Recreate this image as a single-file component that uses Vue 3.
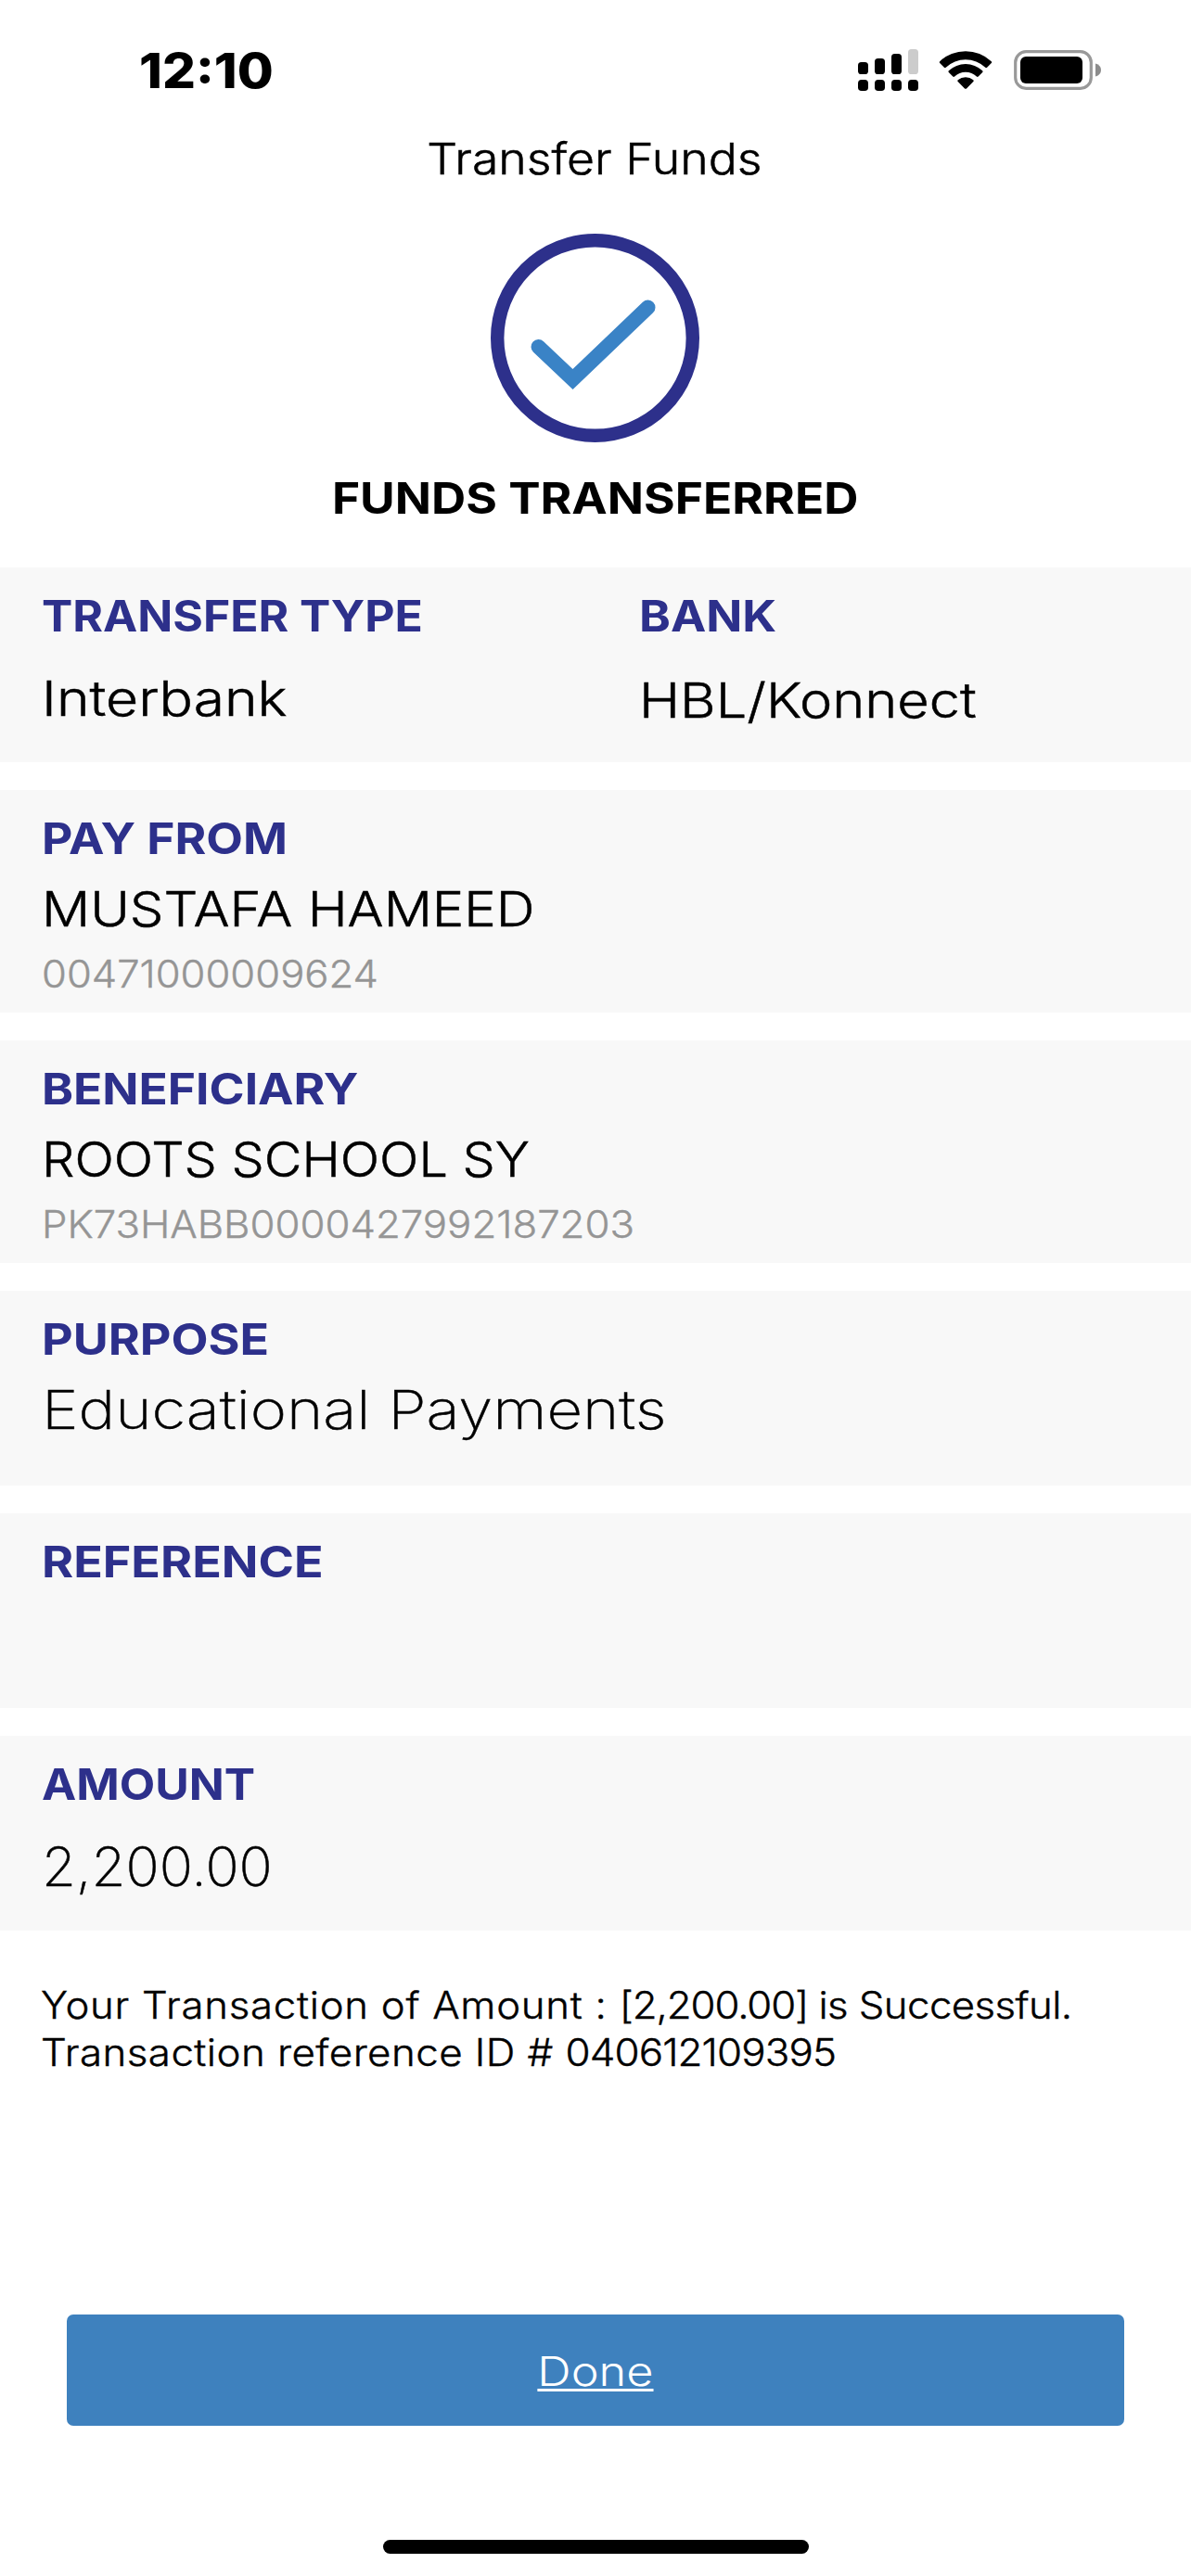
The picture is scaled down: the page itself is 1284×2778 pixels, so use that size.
<script setup>
const sections = [
  {
    id: 'type',
    cells: [
      { label: 'TRANSFER TYPE', labelStretch: 1.075, value: 'Interbank', kind: 'spaced', stretch: 1.165 },
      { label: 'BANK', labelStretch: 1.105, value: 'HBL/Konnect', kind: 'spaced low', stretch: 1.144 }
    ]
  },
  {
    id: 'from',
    tall: true,
    cells: [
      { label: 'PAY FROM', labelStretch: 1.11, value: 'MUSTAFA HAMEED', kind: 'name', stretch: 1.115, sub: '00471000009624', subStretch: 1.062 }
    ]
  },
  {
    id: 'beneficiary',
    tall: true,
    cells: [
      { label: 'BENEFICIARY', labelStretch: 1.11, value: 'ROOTS SCHOOL SY', kind: 'name', stretch: 1.073, sub: 'PK73HABB0000427992187203', subStretch: 1.066 }
    ]
  },
  { id: 'purpose', cells: [{ label: 'PURPOSE', labelStretch: 1.12, value: 'Educational Payments', kind: 'large', stretch: 1.155 }] },
  { id: 'reference', cells: [{ label: 'REFERENCE', labelStretch: 1.122 }] },
  { id: 'amount', cells: [{ label: 'AMOUNT', labelStretch: 1.076, value: '2,200.00', kind: 'large amount', stretch: 1.033 }] }
]

const widen = (n) => ({ transform: `scaleX(${n})` })
</script>

<template>
  <main class="screen">
    <header class="status">
      <span class="time">12:10</span>
      <div class="indicators">
        <svg class="signal" width="65" height="45" viewBox="0 0 65 45">
          <rect x="0" y="14" width="11" height="13" rx="3.6" />
          <rect x="18" y="10" width="11" height="17" rx="3.6" />
          <rect x="36" y="5" width="11" height="22" rx="3.6" />
          <rect x="54" y="0" width="11" height="27" rx="3.6" fill="#ccc" />
          <rect v-for="x in [0, 18, 36, 54]" :key="x" :x="x" y="33" width="11" height="12" rx="3.8" />
        </svg>
        <svg class="wifi" width="58" height="43" viewBox="0 0 58 43">
          <path d="M1.2 12.2a40.5 40.5 0 0 1 55.6 0q.9.9 0 1.8l-4.7 4.7q-.9.8-1.8 0a31 31 0 0 0-42.6 0q-.9.8-1.8 0l-4.7-4.7q-.9-.9 0-1.8z" />
          <path d="M10.8 22.2a26.8 26.8 0 0 1 36.4 0q.9.9 0 1.8l-4.5 4.5q-.9.8-1.8 0a17.5 17.5 0 0 0-23.8 0q-.9.8-1.8 0l-4.5-4.5q-.9-.9 0-1.8z" />
          <path d="M20.7 32.3a13 13 0 0 1 16.6 0q1 .9 0 1.8l-7.3 7.3q-1 .9-2 0l-7.3-7.3q-1-.9 0-1.8z" />
        </svg>
        <svg class="battery" width="95" height="43" viewBox="0 0 95 43">
          <rect x="1.7" y="1.7" width="81.6" height="39.6" rx="11.5" fill="none" stroke="#999" stroke-width="3.2" />
          <rect x="7" y="7" width="67" height="29" rx="6" />
          <path d="M88 14.5q6 1.8 6 7t-6 7z" fill="#8c8c8c" />
        </svg>
      </div>
    </header>

    <h1 class="title"><span :style="widen(1.115)">Transfer Funds</span></h1>

    <svg class="check" width="225" height="225" viewBox="0 0 225 225" fill="none">
      <circle cx="112.5" cy="112.5" r="105.3" stroke="#2d308b" stroke-width="14.4" />
      <path d="M51.5 122 88.5 157 169.5 79.500" stroke="#3a83c6" stroke-width="16" stroke-linecap="round" />
    </svg>

    <h2 class="headline"><span :style="widen(1.11)">FUNDS TRANSFERRED</span></h2>

    <div class="sections">
      <section v-for="s in sections" :key="s.id" class="section" :class="{ tall: s.tall }">
        <div v-for="c in s.cells" :key="c.label" class="cell">
          <div class="label"><span :style="widen(c.labelStretch)">{{ c.label }}</span></div>
          <div v-if="c.value" class="value" :class="c.kind"><span :style="widen(c.stretch)">{{ c.value }}</span></div>
          <div v-if="c.sub" class="sub"><span :style="widen(c.subStretch)">{{ c.sub }}</span></div>
        </div>
      </section>
    </div>

    <p class="message">
      <span :style="widen(1.078)"><i class="loose">Your Transaction of Amount : </i><i class="sum">[2,200.00] </i><i class="tail">is Successful.</i></span>
      <span :style="widen(1.083)"><i class="ref">Transaction reference ID # </i><i class="digits">040612109395</i></span>
    </p>

    <button class="done"><span :style="widen(1.16)">Done</span></button>

    <div class="home"></div>
  </main>
</template>

<style>
body {
  background: #fff;
}
</style>

<style scoped>
.screen {
  width: 1284px;
  height: 2778px;
  display: flex;
  flex-direction: column;
  background: #fff;
  color: #000;
  font-family: Inter, sans-serif;
  overflow: hidden;
}
span {
  display: inline-block;
  white-space: nowrap;
  transform-origin: left center;
}
.status {
  flex: none;
  height: 139px;
  display: flex;
  justify-content: space-between;
  align-items: flex-start;
  padding: 0 96px 0 150px;
}
.time {
  margin-top: 45px;
  font-size: 52px;
  line-height: 64px;
  font-weight: 800;
  transform: scaleX(1.086);
}
.indicators {
  display: flex;
  padding-top: 53px;
}
.wifi {
  margin: 1px 0 0 22px;
}
.battery {
  margin: 1px 0 0 23px;
}
.title,
.headline {
  margin: 0;
  flex: none;
  font-size: 46.4px;
  line-height: 64px;
  text-align: center;
}
.title span,
.headline span,
.done span {
  transform-origin: center;
}
.title {
  padding-right: 2px;
  font-weight: 300;
  -webkit-text-stroke: 0.5px currentColor;
}
.headline {
  margin-top: 28px;
  font-weight: 700;
}
.check {
  flex: none;
  align-self: center;
  margin: 49px 2px 0 0;
}
.sections {
  flex: none;
  display: flex;
  flex-direction: column;
  gap: 30px;
  margin-top: 43px;
}
.section {
  box-sizing: border-box;
  height: 210px;
  display: grid;
  grid-template-columns: 644px 1fr;
  padding: 24px 0 0 45px;
  background: #f8f8f8;
}
.section.tall {
  height: 240px;
}
.label {
  font-size: 46.4px;
  line-height: 56px;
  font-weight: 700;
  color: #2d308b;
}
.value {
  font-size: 52px;
  line-height: 64px;
  font-weight: 300;
  -webkit-text-stroke: 0.5px currentColor;
}
.spaced {
  margin-top: 30px;
}
.spaced.low {
  margin-top: 32px;
}
.name {
  margin-top: 17px;
}
.large {
  margin-top: 12px;
  font-size: 58px;
  line-height: 72px;
  font-weight: 200;
}
.large.amount {
  margin-top: 25px;
}
.sub {
  margin-top: 13px;
  font-size: 41px;
  line-height: 48px;
  font-weight: 300;
  color: #959595;
  -webkit-text-stroke: 0.4px currentColor;
}
.message {
  flex: none;
  display: flex;
  flex-direction: column;
  align-items: flex-start;
  margin: 55px 0 0 44px;
  font-size: 40.5px;
  line-height: 51px;
  font-weight: 300;
  -webkit-text-stroke: 0.4px currentColor;
}
.message span {
  white-space: pre;
}
.message i {
  font-style: normal;
}
.loose {
  letter-spacing: 0.7px;
}
.sum {
  letter-spacing: -1px;
}
.tail {
  letter-spacing: -0.5px;
}
.ref {
  letter-spacing: 0.4px;
}
.digits {
  letter-spacing: -0.8px;
}
.done {
  flex: none;
  display: flex;
  justify-content: center;
  height: 120px;
  margin: 257px 72px 0;
  padding: 29px 1px 0 0;
  border: 0;
  border-radius: 7px;
  background: #3e81be;
  color: #fff;
  font-family: inherit;
  font-size: 43.5px;
  line-height: 64px;
  font-weight: 300;
}
.done span {
  text-decoration: underline;
  text-decoration-thickness: 3px;
  text-underline-offset: 3px;
}
.home {
  flex: none;
  align-self: center;
  width: 459px;
  height: 15px;
  margin-top: 123px;
  border-radius: 8px;
  background: #000;
}
</style>
